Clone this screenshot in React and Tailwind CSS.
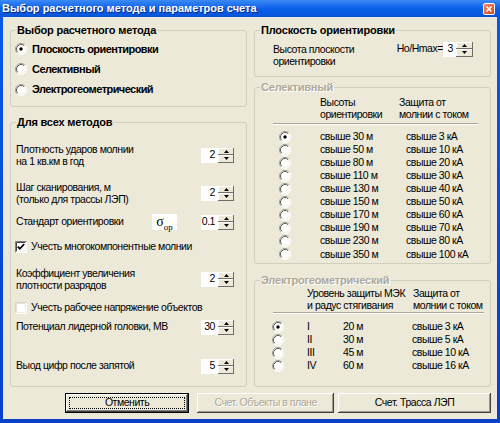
import React from "react";

function Radio({ checked }) {
  return (
    <svg width="12" height="12" viewBox="0 0 12 12" className="shrink-0">
      <circle cx="6" cy="6" r="5.5" fill="#fff" />
      <path d="M2.11 9.89A5.5 5.5 0 0 1 9.89 2.11" stroke="#A09E94" fill="none" />
      <path d="M2.82 9.18A4.5 4.5 0 0 1 9.18 2.82" stroke="#5F5D55" fill="none" />
      <path d="M9.89 2.11A5.5 5.5 0 0 1 2.11 9.89" stroke="#ffffff" fill="none" />
      <path d="M9.18 2.82A4.5 4.5 0 0 1 2.82 9.18" stroke="#F1EFE2" fill="none" />
      {checked && <circle cx="6" cy="6" r="1.7" fill="#000" />}
    </svg>
  );
}

function Check({ checked }) {
  return (
    <svg width="12" height="12" viewBox="0 0 12 12" className="shrink-0">
      <rect x="0" y="0" width="12" height="12" fill="#fff" />
      <path d="M0.5 11.5V0.5H11.5" stroke={checked ? "#808080" : "#D8D6CC"} fill="none" />
      <path d="M1.5 10.5V1.5H10.5" stroke={checked ? "#404040" : "#E4E2D8"} fill="none" />
      <path d="M1.5 10.5H10.5V1.5" stroke="#F1EFE2" fill="none" />
      {checked && (
        <polyline points="2.8,5.6 4.8,7.8 9.2,3.2" stroke="#000" strokeWidth="1.7" fill="none" />
      )}
    </svg>
  );
}

function SpinHalf({ up, h }) {
  return (
    <div
      className={
        "flex items-center justify-center bg-[#ECE9D8] shadow-[inset_-1px_-1px_0_#6f6d64,inset_1px_1px_0_#ffffff] " +
        h
      }
    >
      <svg width="5" height="3" viewBox="0 0 5 3">
        <polygon points={up ? "2.5,0 5,3 0,3" : "0,0 5,0 2.5,3"} fill="#000" />
      </svg>
    </div>
  );
}

function Spin({ value, boxW = "w-[17px]", btnW = "w-[16px]" }) {
  return (
    <div className="flex h-[15px] shrink-0">
      <div className={"h-full bg-white flex items-center justify-end pr-[3px] " + boxW}>
        {value}
      </div>
      <div className={"h-full flex flex-col " + btnW}>
        <SpinHalf up h="h-[7px]" />
        <SpinHalf h="h-[8px]" />
      </div>
    </div>
  );
}

function Group({ title, disabled, className = "", children }) {
  return (
    <fieldset
      className={"min-w-0 border border-[#D0D0BF] rounded-[3px] " + className}
    >
      <legend
        className={
          "ml-[5px] px-[1px] font-bold text-[11px] tracking-[-0.2px] leading-[13px] " +
          (disabled ? "text-[#ACA899] [text-shadow:1px_1px_0_#fff]" : "text-black")
        }
      >
        {title}
      </legend>
      {children}
    </fieldset>
  );
}

const sel = [
  ["свыше 30 м", "свыше 3 кА"],
  ["свыше 50 м", "свыше 10 кА"],
  ["свыше 80 м", "свыше 20 кА"],
  ["свыше 110 м", "свыше 30 кА"],
  ["свыше 130 м", "свыше 40 кА"],
  ["свыше 150 м", "свыше 50 кА"],
  ["свыше 170 м", "свыше 60 кА"],
  ["свыше 190 м", "свыше 70 кА"],
  ["свыше 230 м", "свыше 80 кА"],
  ["свыше 350 м", "свыше 100 кА"],
];

const eg = [
  ["I", "20 м", "свыше 3 кА"],
  ["II", "30 м", "свыше 5 кА"],
  ["III", "45 м", "свыше 10 кА"],
  ["IV", "60 м", "свыше 16 кА"],
];

function Etched({ className }) {
  return (
    <div className={"h-[2px] border-t border-[#ACA899] border-b border-b-white " + className} />
  );
}

function Btn({ children, className = "", isDefault, disabled }) {
  return (
    <div
      className={
        "h-full flex bg-[#ECE9D8] " +
        (isDefault
          ? "border border-black shadow-[inset_-1px_-1px_0_#404040,inset_1px_1px_0_#fff,inset_-2px_-2px_0_#808080] p-[3px] "
          : "shadow-[inset_-1px_-1px_0_#404040,inset_1px_1px_0_#fff,inset_-2px_-2px_0_#9d9b90] ") +
        className
      }
    >
      <div
        className={
          "flex-1 flex items-center justify-center " +
          (isDefault ? "border border-dotted border-black " : "") +
          (disabled ? "text-[#ACA899] [text-shadow:1px_1px_0_#fff]" : "text-black")
        }
      >
        {children}
      </div>
    </div>
  );
}

export default function App() {
  return (
    <div className="w-[500px] h-[423px] flex flex-col bg-gradient-to-b from-[#0a5ae6] to-[#0840c8] font-['Liberation_Sans',Arial,sans-serif] text-[10.5px] tracking-[-0.45px] text-black overflow-hidden">
      {/* Title bar */}
      <div className="h-[17px] shrink-0 flex items-center justify-between pl-[2px] pr-[5px] bg-gradient-to-b from-[#3a8af5] via-[#0c5fe8] to-[#0754dc]">
        <span className="text-white font-bold text-[11px] tracking-normal leading-[13px] [text-shadow:1px_1px_0_#0a2a80]">
          Выбор расчетного метода и параметров счета
        </span>
        <div className="w-[12px] h-[12px] rounded-[2px] border border-white bg-gradient-to-br from-[#f08a5c] to-[#d2441c] flex items-center justify-center">
          <svg width="6" height="6" viewBox="0 0 6 6">
            <path d="M0.5 0.5L5.5 5.5M5.5 0.5L0.5 5.5" stroke="#fff" strokeWidth="1.5" />
          </svg>
        </div>
      </div>

      {/* Body */}
      <div className="flex-1 mx-[3px] mb-[4px] bg-[#ECE9D8] flex flex-col pt-[7px] pl-[7px] pr-[6px]">
        <div className="flex gap-[7px] h-[363px]">
          {/* Left column */}
          <div className="w-[237px] flex flex-col">
            <Group title="Выбор расчетного метода" className="h-[83px]">
              <div className="flex flex-col pt-[2px] pl-[4px] font-bold text-[11px] tracking-[-0.55px]">
                <div className="h-[20px] flex items-center gap-[5px]">
                  <Radio checked />
                  <span>Плоскость ориентировки</span>
                </div>
                <div className="h-[20px] flex items-center gap-[5px]">
                  <Radio />
                  <span>Селективный</span>
                </div>
                <div className="h-[21px] flex items-center gap-[5px]">
                  <Radio />
                  <span>Электрогеометрический</span>
                </div>
              </div>
            </Group>

            <Group title="Для всех методов" className="mt-[9px] flex-1">
              <div className="flex flex-col pl-[5px] pr-[12px]">
                <div className="mt-[14px] h-[24px] flex items-center justify-between">
                  <div className="leading-[12px]">
                    Плотность ударов молнии
                    <br />
                    на 1 кв.км в год
                  </div>
                  <Spin value="2" />
                </div>
                <div className="mt-[14px] h-[24px] flex items-center justify-between">
                  <div className="leading-[12px]">
                    Шаг сканирования, м
                    <br />
                    (только для трассы ЛЭП)
                  </div>
                  <Spin value="2" />
                </div>
                <div className="mt-[8px] h-[18px] flex items-center">
                  <div className="w-[136px]">Стандарт ориентировки</div>
                  <div className="w-[25px] h-[16px] bg-white flex items-center justify-center font-['Liberation_Serif',serif] text-[14px] tracking-normal leading-[14px]">
                    <span>
                      σ<sub className="text-[9px] leading-[0] align-[-2px]">ор</sub>
                    </span>
                  </div>
                  <div className="ml-auto">
                    <Spin value="0.1" />
                  </div>
                </div>
                <div className="mt-[8px] h-[16px] flex items-center gap-[4px] -ml-[1px]">
                  <Check checked />
                  <span>Учесть многокомпонентные молнии</span>
                </div>
                <div className="mt-[12px] h-[24px] flex items-center justify-between">
                  <div className="leading-[12px]">
                    Коэффициент увеличения
                    <br />
                    плотности разрядов
                  </div>
                  <Spin value="2" />
                </div>
                <div className="mt-[9px] h-[16px] flex items-center gap-[4px] -ml-[1px]">
                  <Check />
                  <span>Учесть рабочее напряжение объектов</span>
                </div>
                <div className="mt-[3px] h-[16px] flex items-center justify-between">
                  <div>Потенциал лидерной головки, МВ</div>
                  <Spin value="30" />
                </div>
                <div className="mt-[23px] h-[16px] flex items-center justify-between">
                  <div>Выод цифр после запятой</div>
                  <Spin value="5" />
                </div>
              </div>
            </Group>
          </div>

          {/* Right column */}
          <div className="w-[237px] flex flex-col">
            <Group title="Плоскость ориентировки" className="h-[53px]">
              <div className="flex pl-[18px] pr-[17px] mt-[6px]">
                <div className="leading-[12px]">
                  Высота плоскости
                  <br />
                  ориентировки
                </div>
                <div className="ml-auto flex items-center h-[12px]">
                  <span>Ho/Hmax=</span>
                  <Spin value="3" boxW="w-[13px]" btnW="w-[17px]" />
                </div>
              </div>
            </Group>

            <Group title="Селективный" disabled className="mt-[4px] h-[183px]">
              <div className="flex flex-col">
                <div className="flex mt-[2px] pl-[65px] leading-[12px] whitespace-nowrap">
                  <div className="w-[79px] shrink-0">
                    Высоты
                    <br />
                    ориентировки
                  </div>
                  <div>
                    Защита от
                    <br />
                    молнии с током
                  </div>
                </div>
                <Etched className="ml-[18px] w-[205px] mt-[3px]" />
                <div className="flex flex-col mt-[5px] whitespace-nowrap">
                  {sel.map(([a, b], i) => (
                    <div key={i} className="h-[13.1px] flex items-center">
                      <div className="ml-[24px] w-[12px] shrink-0">
                        <Radio checked={i === 0} />
                      </div>
                      <div className="ml-[29px] w-[86px] shrink-0">{a}</div>
                      <div>{b}</div>
                    </div>
                  ))}
                </div>
              </div>
            </Group>

            <Group title="Электрогеометрический" disabled className="mt-[10px] flex-1">
              <div className="flex flex-col">
                <div className="flex pl-[52px] leading-[12px] whitespace-nowrap">
                  <div className="w-[106px] shrink-0">
                    Уровень защиты МЭК
                    <br />
                    и радус стягивания
                  </div>
                  <div>
                    Защита от
                    <br />
                    молнии с током
                  </div>
                </div>
                <Etched className="ml-[18px] w-[211px] mt-[1px]" />
                <div className="flex flex-col mt-[6px] whitespace-nowrap">
                  {eg.map(([r, d, c], i) => (
                    <div key={i} className="h-[13px] flex items-center">
                      <div className="ml-[17px] w-[12px] shrink-0">
                        <Radio checked={i === 0} />
                      </div>
                      <div className="ml-[23px] w-[36px] shrink-0">{r}</div>
                      <div className="w-[69px] shrink-0">{d}</div>
                      <div>{c}</div>
                    </div>
                  ))}
                </div>
              </div>
            </Group>
          </div>
        </div>

        {/* Buttons */}
        <div className="flex mt-[6px] h-[20px] pl-[55px]">
          <Btn isDefault className="w-[125px]">
            Отменить
          </Btn>
          <Btn disabled className="w-[138px] ml-[8px]">
            Счет. Объекты в плане
          </Btn>
          <Btn className="w-[154px] ml-[4px]">Счет. Трасса ЛЭП</Btn>
        </div>
      </div>
    </div>
  );
}
